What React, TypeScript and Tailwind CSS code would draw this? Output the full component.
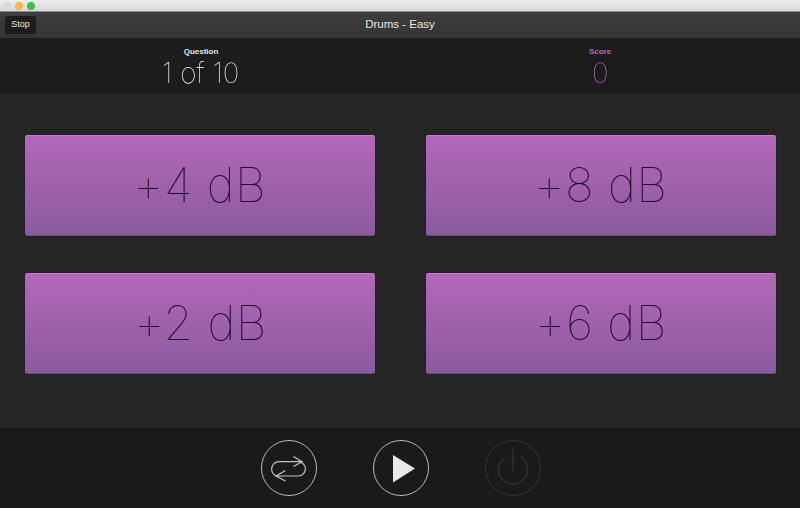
const thin = "font-['Inter','Roboto',sans-serif] font-thin [will-change:transform]";

function Answer({ label }: { label: string }) {
  return (
    <button className="h-[101px] rounded-[2px] border-t border-t-[#c47fc8] border-b border-b-[#6f4a80] bg-gradient-to-b from-[#b368ba] to-[#8b5a9e] shadow-[0_0_1px_#111] flex items-center justify-center pb-[2px]">
      <span className={`${thin} text-[48px] leading-none text-[#1f0a28] tracking-[0.4px]`}>{label}</span>
    </button>
  );
}

function Circle({ children, dim }: { children: React.ReactNode; dim?: boolean }) {
  return (
    <div className={`w-[56px] h-[56px] rounded-full border-[1.5px] flex items-center justify-center ${dim ? "border-[#333333]" : "border-[#bdbdbd]"}`}>
      {children}
    </div>
  );
}

export default function App() {
  return (
    <div className="w-[800px] h-[508px] flex flex-col overflow-hidden font-['Liberation_Sans',sans-serif]">
      <div className="h-[12px] shrink-0 bg-gradient-to-b from-[#ececec] to-[#d8d8d8] border-b border-[#8a8a8a] flex items-center gap-[4px] pl-[3px]">
        <span className="w-[8px] h-[8px] rounded-full bg-[#d9d9d9]" />
        <span className="w-[8px] h-[8px] rounded-full bg-[#f5b83d]" />
        <span className="w-[8px] h-[8px] rounded-full bg-[#3dc04a]" />
      </div>
      <div className="h-[26px] shrink-0 bg-gradient-to-b from-[#3e3e3e] to-[#343434] relative flex items-center justify-center">
        <div className="absolute left-[5px] top-[4px] w-[31px] h-[18px] rounded-[3px] bg-[#1c1c1c] text-[#e8e8e8] text-[9px] flex items-center justify-center">Stop</div>
        <span className="text-[#e6e6e6] text-[11.5px]">Drums - Easy</span>
      </div>
      <div className="h-[56px] shrink-0 bg-[#1c1c1c] grid grid-cols-2 overflow-hidden">
        <div className="flex flex-col items-center pt-[10px] pl-[2px]">
          <span className="text-[8px] font-bold leading-[8px] text-[#e6e6e6]">Question</span>
          <span className={`${thin} text-[28px] leading-[34px] text-[#ffffff]`}>1 of 10</span>
        </div>
        <div className="flex flex-col items-center pt-[10px]">
          <span className="text-[8px] font-bold leading-[8px] text-[#b56cc0]">Score</span>
          <span className={`${thin} text-[28px] leading-[34px] text-[#c878d4]`}>0</span>
        </div>
      </div>
      <div className="flex-1 bg-[#252525] px-[25px] pt-[41px]">
        <div className="grid grid-cols-[350px_350px] gap-x-[51px] gap-y-[37px]">
          <Answer label="+4 dB" />
          <Answer label="+8 dB" />
          <Answer label="+2 dB" />
          <Answer label="+6 dB" />
        </div>
      </div>
      <div className="h-[80px] shrink-0 bg-[#1a1a1a] flex items-center justify-center gap-[56px] pl-[2px]">
        <Circle>
          <svg width="52" height="52" viewBox="-26 -26 52 52" fill="none" stroke="#c4c4c4" strokeWidth="1.2">
            <path d="M4.5 -11.5L13 -6.3L4.5 -1.5" />
            <path d="M13 -6.3H-10A7.4 7.4 0 0 0 -10 8.5" />
            <path d="M-3.5 2.5L-13 8L-3.5 13" />
            <path d="M-13 8H10A7.2 7.2 0 0 0 10 -6.3" />
          </svg>
        </Circle>
        <Circle>
          <svg width="52" height="52" viewBox="-26 -26 52 52"><path d="M-8 -13L14 0.5L-8 14.5Z" fill="#e8e8e8" /></svg>
        </Circle>
        <Circle dim>
          <svg width="52" height="52" viewBox="-26 -26 52 52" fill="none" stroke="#333333" strokeWidth="1.3">
            <path d="M0 -19V3" />
            <path d="M-8 -10.5A14.5 14.5 0 1 0 8 -10.5" />
          </svg>
        </Circle>
      </div>
    </div>
  );
}
